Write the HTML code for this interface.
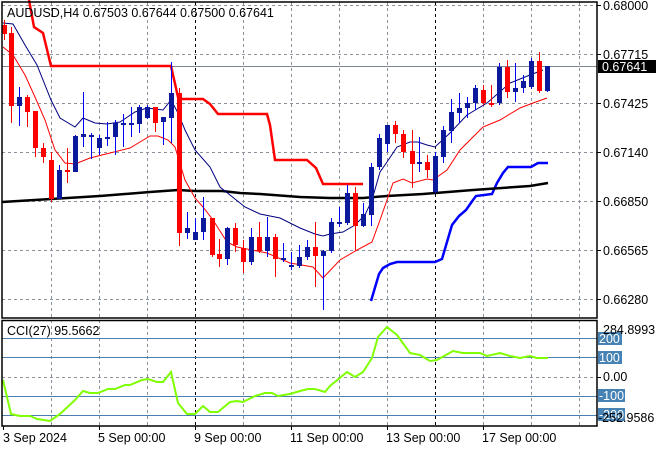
<!DOCTYPE html>
<html><head><meta charset="utf-8"><style>
html,body{margin:0;padding:0;background:#fff;width:660px;height:450px;overflow:hidden}
svg{display:block}
text{font-family:"Liberation Sans",sans-serif;font-size:12.5px;fill:#000}
</style></head><body>
<svg width="660" height="450" viewBox="0 0 660 450" xmlns="http://www.w3.org/2000/svg">
<g stroke="#8a939c" stroke-dasharray="3,3" stroke-width="1">
<line x1="2" y1="5.5" x2="597" y2="5.5"/><line x1="2" y1="54.5" x2="597" y2="54.5"/><line x1="2" y1="103.5" x2="597" y2="103.5"/><line x1="2" y1="152.5" x2="597" y2="152.5"/><line x1="2" y1="201.5" x2="597" y2="201.5"/><line x1="2" y1="250.5" x2="597" y2="250.5"/><line x1="2" y1="299.5" x2="597" y2="299.5"/>
<line x1="2" y1="377.5" x2="597" y2="377.5"/>
<line x1="51.5" y1="2" x2="51.5" y2="426"/><line x1="99.5" y1="2" x2="99.5" y2="426"/><line x1="147.5" y1="2" x2="147.5" y2="426"/><line x1="243.5" y1="2" x2="243.5" y2="426"/><line x1="291.5" y1="2" x2="291.5" y2="426"/><line x1="339.5" y1="2" x2="339.5" y2="426"/><line x1="387.5" y1="2" x2="387.5" y2="426"/><line x1="483.5" y1="2" x2="483.5" y2="426"/><line x1="531.5" y1="2" x2="531.5" y2="426"/><line x1="579.5" y1="2" x2="579.5" y2="426"/>
</g>
<g stroke="#000" stroke-dasharray="3,3"><line x1="195.5" y1="2" x2="195.5" y2="426"/><line x1="435.5" y1="2" x2="435.5" y2="426"/></g>
<line x1="2" y1="66.5" x2="597" y2="66.5" stroke="#7a8590"/>
<g stroke="#4a7fb0"><line x1="2" y1="338.5" x2="597" y2="338.5"/><line x1="2" y1="357.5" x2="597" y2="357.5"/><line x1="2" y1="396.5" x2="597" y2="396.5"/><line x1="2" y1="415.5" x2="597" y2="415.5"/></g>
<polyline fill="none" stroke="#ff0000" stroke-width="2.5" points="29,0 34,27 43,33 51,66 171,66 178,97 181,99 203,99 210,104 218,114 267,114 270,125 275,160 307,160 316,168 323,184 363,184"/>
<polyline fill="none" stroke="#0000ff" stroke-width="2.5" points="371,301 379,274 383,268 390,264 397,262 435,262 442,259 452,225 459,216 466,210 473,200 476,196 492,194 497,183 503,173 508,167 531,167 538,163 548,163"/>
<polyline fill="none" stroke="#000" stroke-width="2.5" points="2,202 51,199 100,196 150,192 178,190 195,191 222,191 240,193 260,194 300,197 330,198 363,198 387,196 423,194 473,190 530,186 548,183"/>
<polyline fill="none" stroke="#000080" stroke-width="1" points="3,23 13,24 25,45 37,65 51,100 60,118 75,127 83,118 95,123 107,124 120,122 135,112 147,108 163,110 171,100 178,113 185,130 195,150 210,167 220,187 230,195 245,207 260,214 280,218 300,228 315,234 323,236 330,234 343,232 355,225 365,215 372,200 380,172 387,162 397,147 410,142 418,142 427,145 435,147 450,133 467,115 487,103 510,83 530,75 543,70"/>
<polyline fill="none" stroke="#ff0000" stroke-width="1" points="3,47 13,55 25,75 35,97 45,120 55,150 65,163 75,164 90,158 110,153 130,148 140,142 150,136 158,136 168,140 175,147 185,180 195,198 203,207 213,220 227,242 237,247 267,253 290,263 313,267 323,278 340,260 357,250 372,242 380,220 393,183 403,179 412,183 427,179 433,180 447,170 460,150 483,127 500,120 520,108 533,103 547,98"/>
<g id="c"></g>
<polyline fill="none" stroke="#7fff00" stroke-width="2" points="3,380 11,414 20,416 30,416 37,419 50,421 60,414 75,400 83,391 90,393 98,393 108,389 115,389 125,385 130,385 142,380 148,379 157,382 163,382 171,372 178,403 187,414 195,414 203,406 210,412 218,412 230,402 237,401 243,402 255,396 265,393 272,393 278,396 290,394 300,391 308,389 315,389 325,392 330,386 347,372 355,377 363,372 372,358 378,337 387,327 397,335 410,353 420,355 430,361 437,360 453,351 463,353 480,353 487,356 500,353 510,356 520,358 530,356 537,358 548,358"/>
<g fill="none" stroke="#000" stroke-width="1.5"><rect x="2" y="2" width="595" height="316"/><rect x="2" y="320.5" width="595" height="105.5"/></g>
<g stroke="#000"><line x1="597" y1="5.5" x2="601" y2="5.5"/><line x1="597" y1="54.5" x2="601" y2="54.5"/><line x1="597" y1="103.5" x2="601" y2="103.5"/><line x1="597" y1="152.5" x2="601" y2="152.5"/><line x1="597" y1="201.5" x2="601" y2="201.5"/><line x1="597" y1="250.5" x2="601" y2="250.5"/><line x1="597" y1="299.5" x2="601" y2="299.5"/><line x1="597" y1="377.5" x2="601" y2="377.5"/></g>
<text x="603" y="10">0.68000</text><text x="603" y="59">0.67715</text><text x="603" y="108">0.67425</text><text x="603" y="157">0.67140</text><text x="603" y="206">0.66850</text><text x="603" y="255">0.66565</text><text x="603" y="304">0.66280</text>
<rect x="598" y="60" width="58" height="13" fill="#000"/><text x="602" y="71" style="fill:#fff">0.67641</text>
<rect x="598" y="332" width="24" height="13" fill="#4682b4"/><rect x="598" y="351" width="24" height="13" fill="#4682b4"/><rect x="598" y="389" width="27" height="13" fill="#4682b4"/><rect x="598" y="408" width="27" height="13" fill="#4682b4"/>
<text x="599" y="343" style="fill:#fff">200</text><text x="599" y="362" style="fill:#fff">100</text><text x="599" y="400" style="fill:#fff">-100</text><text x="599" y="419" style="fill:#fff">-200</text>
<text x="603" y="334">284.8993</text><text x="603" y="381">0.00</text><text x="598" y="422">-252.9586</text>
<g stroke="#000"><line x1="3.5" y1="426" x2="3.5" y2="430"/><line x1="99.5" y1="426" x2="99.5" y2="430"/><line x1="195.5" y1="426" x2="195.5" y2="430"/><line x1="291.5" y1="426" x2="291.5" y2="430"/><line x1="387.5" y1="426" x2="387.5" y2="430"/><line x1="483.5" y1="426" x2="483.5" y2="430"/></g>
<text x="3" y="442">3 Sep 2024</text><text x="98" y="442">5 Sep 00:00</text><text x="194" y="442">9 Sep 00:00</text><text x="290" y="442">11 Sep 00:00</text><text x="386" y="442">13 Sep 00:00</text><text x="482" y="442">17 Sep 00:00</text>
<text x="7" y="17">AUDUSD,H4  0.67503 0.67644 0.67500 0.67641</text>
<text x="7" y="335">CCI(27) 95.5662</text>
</svg>
<script>
var d=[[4,20,25,34,40,'r'],[11,27,33,106,123,'r'],[19,87,97,106,126,'b'],[27,95,97,112,127,'r'],[35,111,111,148,157,'r'],[43,143,148,157,163,'r'],[51,152,160,199,202,'r'],[59,165,170,199,199,'b'],[67,148,170,172,183,'r'],[75,135,136,172,172,'b'],[83,92,134,137,147,'b'],[91,133,135,136,159,'b'],[99,135,138,148,155,'b'],[107,122,137,138,146,'b'],[115,120,123,137,155,'b'],[123,114,123,124,147,'b'],[131,107,123,124,137,'b'],[139,105,107,124,133,'b'],[147,105,107,118,119,'b'],[155,107,107,123,132,'r'],[163,117,117,122,145,'b'],[171,62,93,118,143,'b'],[179,88,93,233,246,'r'],[187,212,228,233,239,'b'],[195,218,232,240,240,'b'],[203,197,218,232,240,'b'],[212,218,218,255,257,'r'],[219,239,254,259,267,'r'],[227,227,228,259,265,'b'],[235,223,228,245,252,'r'],[243,240,248,262,273,'r'],[251,228,237,262,265,'b'],[259,222,237,251,253,'r'],[267,217,237,251,257,'b'],[275,234,237,259,277,'r'],[283,243,258,260,262,'b'],[291,252,265,267,270,'b'],[299,245,257,266,268,'b'],[307,240,247,257,260,'b'],[315,222,247,256,287,'r'],[323,250,251,256,310,'b'],[331,218,222,251,253,'b'],[339,207,222,224,227,'b'],[347,185,193,223,225,'b'],[355,187,193,226,251,'r'],[363,203,214,226,227,'b'],[371,163,167,215,226,'b'],[379,134,138,167,170,'b'],[387,125,125,144,152,'b'],[395,121,125,134,143,'r'],[403,130,134,152,158,'r'],[412,130,151,164,188,'r'],[419,137,162,164,172,'b'],[427,155,162,170,178,'r'],[435,152,156,192,193,'b'],[443,126,130,157,163,'b'],[451,99,112,131,143,'b'],[459,93,108,113,123,'b'],[467,97,103,108,118,'b'],[475,85,88,103,110,'b'],[483,85,90,103,105,'r'],[491,85,103,104,107,'r'],[499,63,67,103,105,'b'],[507,60,67,92,98,'r'],[515,63,88,92,102,'b'],[523,75,81,88,93,'b'],[531,58,61,87,89,'b'],[539,52,61,91,93,'r'],[547,66,66,91,92,'b']];
var g=document.getElementById('c'),s='';
d.forEach(function(c){var col=c[5]=='r'?'#ff0000':'#0000ff',fill=c[5]=='r'?'#ff0000':'#0a1a9a';
s+='<line x1="'+(c[0]+.5)+'" y1="'+c[1]+'" x2="'+(c[0]+.5)+'" y2="'+c[4]+'" stroke="'+col+'"/>';
s+='<rect x="'+(c[0]-2)+'" y="'+c[2]+'" width="5" height="'+Math.max(c[3]-c[2],2)+'" fill="'+fill+'"/>';});
g.innerHTML=s;
</script>
</body></html>
